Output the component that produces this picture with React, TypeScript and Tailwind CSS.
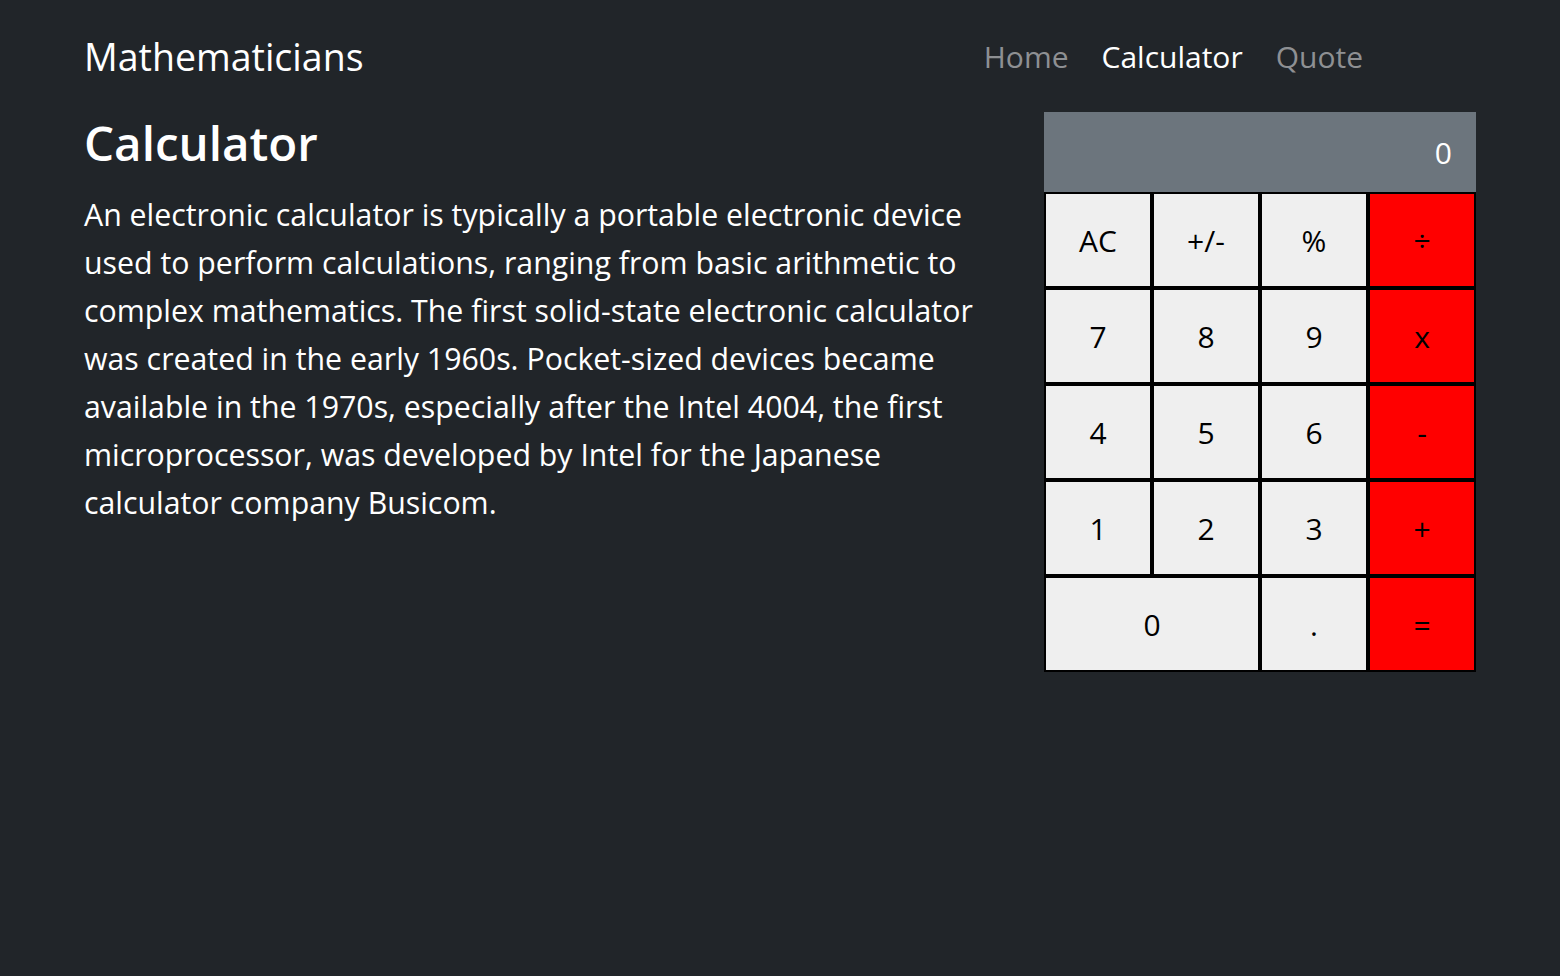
import { useState } from 'react';

const keys = [
  { label: 'AC', op: false },
  { label: '+/-', op: false },
  { label: '%', op: false },
  { label: '÷', op: true },
  { label: '7', op: false },
  { label: '8', op: false },
  { label: '9', op: false },
  { label: 'x', op: true },
  { label: '4', op: false },
  { label: '5', op: false },
  { label: '6', op: false },
  { label: '-', op: true },
  { label: '1', op: false },
  { label: '2', op: false },
  { label: '3', op: false },
  { label: '+', op: true },
  { label: '0', op: false, wide: true },
  { label: '.', op: false },
  { label: '=', op: true },
];

function Calculator() {
  const [total] = useState('0');

  return (
    <div className="w-[432px] shrink-0">
      <div className="h-[80px] bg-[#6c757d] flex items-center justify-end pr-[24px] text-[30px] text-white">
        {total}
      </div>
      <div className="grid grid-cols-4">
        {keys.map((k) => (
          <button
            key={k.label}
            type="button"
            className={`h-[96px] border-2 border-black text-black text-[30px] flex items-center justify-center ${
              k.op ? 'bg-[#ff0000]' : 'bg-[#efefef]'
            } ${k.wide ? 'col-span-2' : ''}`}
          >
            {k.label}
          </button>
        ))}
      </div>
    </div>
  );
}

export default function App() {
  return (
    <div className="min-h-screen bg-[#212529] text-white font-['Open_Sans',sans-serif]">
      {/* Navbar */}
      <nav className="h-[114px] flex items-center justify-between px-[84px]">
        <a href="#" className="text-[37.5px] text-white">
          Mathematicians
        </a>
        <ul className="flex items-center gap-[33px] mr-[113px] text-[30px] -mt-[2px]">
          <li>
            <a href="#" className="text-[#8e9093]">Home</a>
          </li>
          <li>
            <a href="#" className="text-white">Calculator</a>
          </li>
          <li>
            <a href="#" className="text-[#8e9093]">Quote</a>
          </li>
        </ul>
      </nav>

      <main className="flex items-start justify-between px-[84px] -mt-[2px]">
        <section className="w-[920px]">
          <h1 className="text-[47.5px] font-semibold leading-[1.2] mt-[2px] mb-[20px]">Calculator</h1>
          <p className="text-[30.3px] leading-[48px]">
            An electronic calculator is typically a portable electronic device used to perform
            calculations, ranging from basic arithmetic to complex mathematics. The first
            solid-state electronic calculator was created in the early 1960s. Pocket-sized devices
            became available in the 1970s, especially after the Intel 4004, the first
            microprocessor, was developed by Intel for the Japanese calculator company Busicom.
          </p>
        </section>
        <Calculator />
      </main>
    </div>
  );
}
